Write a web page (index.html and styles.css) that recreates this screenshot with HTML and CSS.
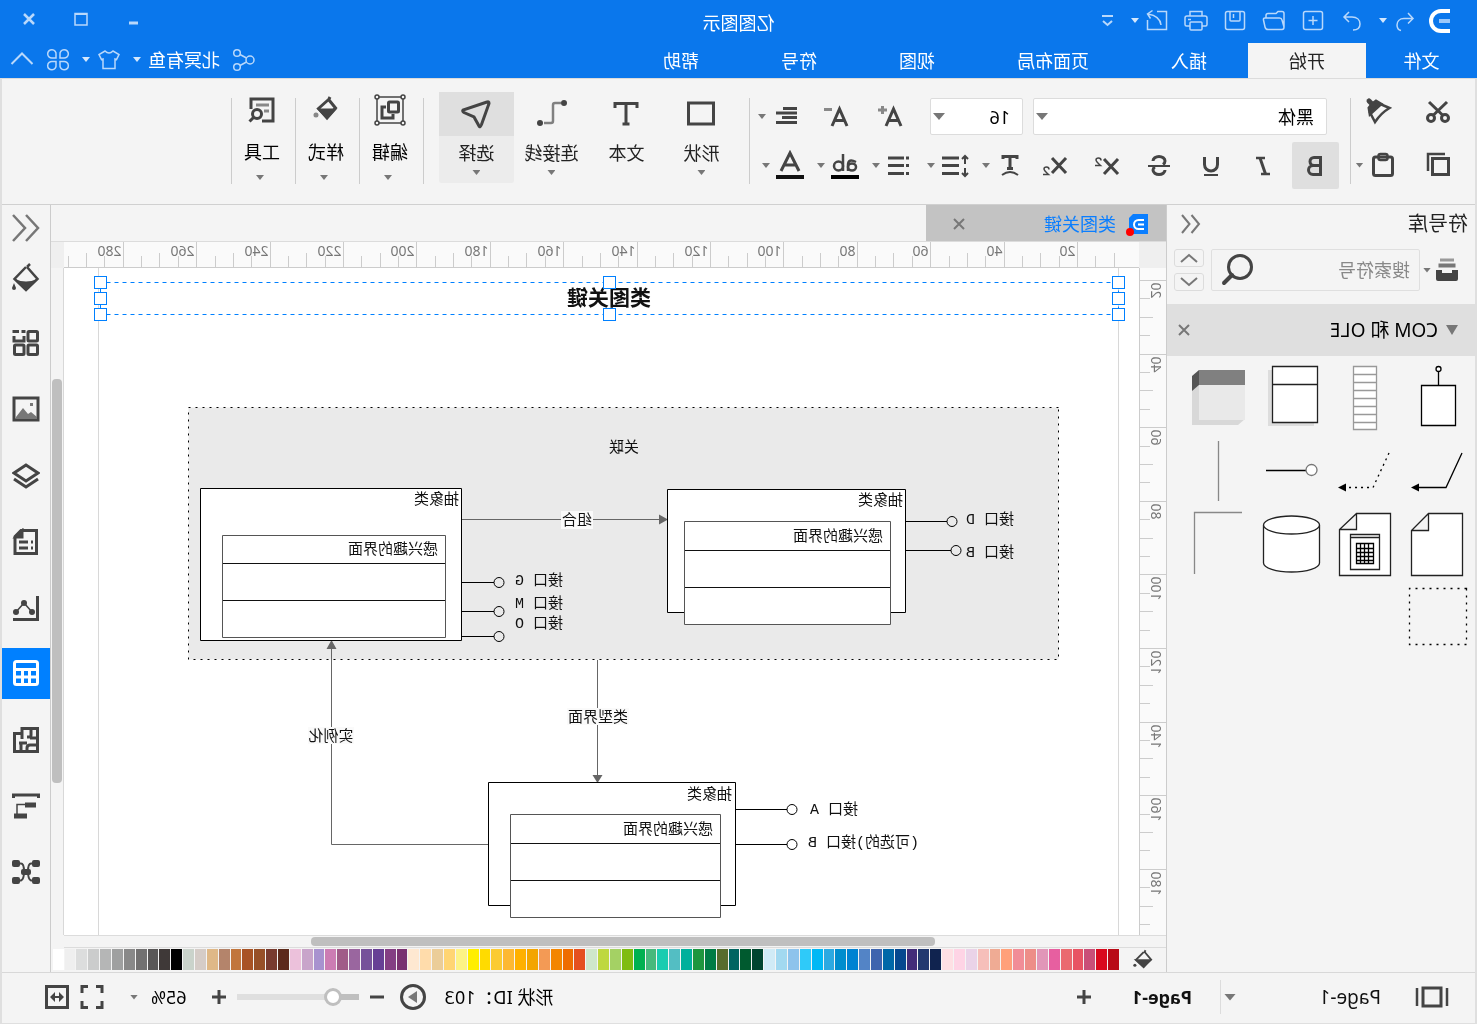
FILE: index.html
```html
<!DOCTYPE html>
<html lang="zh-CN">
<head>
<meta charset="utf-8">
<title>亿图图示</title>
<link rel="stylesheet" href="styles.css">
</head>
<body>
<div class="app">
  <header class="titlebar">
    <div class="quick">
      <svg class="logo" width="22" height="26" viewBox="0 0 22 26"><path d="M0 3H9a10 10 0 0 1 0 20H0" fill="none" stroke="#fff" stroke-width="4"/><path d="M0 13h11" stroke="#9cc8fa" stroke-width="4"/></svg>
      <div class="split"><button class="tool" aria-label="撤销"><svg width="24" height="24" viewBox="0 0 24 24"><path d="M9 4L4 9.500l5 5M4 9.500h9c4.500 0 7 3 7 6.500 0 3-1.500 5-4 5.500"/></svg></button><i class="caret"></i></div>
      <button class="tool" aria-label="重做"><svg width="24" height="24" viewBox="0 0 24 24"><path d="M15 3l5 5-5 5M20 8h-8c-5 0-8 3-8 7s3 6 7 6"/></svg></button>
      <button class="tool" aria-label="新建"><svg width="24" height="24" viewBox="0 0 24 24"><rect x="2.500" y="2.500" width="19" height="18" rx="2"/><path d="M12 7v9M7.500 11.500h9"/></svg></button>
      <button class="tool" aria-label="打开"><svg width="24" height="24" viewBox="0 0 24 24"><path d="M2 18V4.500q0-2 2-2h4l2 2h8q2 0 2 2V9M2 18l2-7q.5-2 2.500-2H21q2 0 1.500 2l-1.500 7q-.5 2.500-3 2.500H4q-2 0-2-2.500"/></svg></button>
      <button class="tool" aria-label="保存"><svg width="24" height="24" viewBox="0 0 24 24"><rect x="2.500" y="2.500" width="19" height="18" rx="2"/><path d="M7 3v8q0 1 1 1h8q1 0 1-1V3M13.500 5v4"/></svg></button>
      <button class="tool" aria-label="打印"><svg width="24" height="24" viewBox="0 0 24 24"><path d="M6 7V2.500h12V7M6 17H2.500Q1 17 1 15.500V9q0-2 2-2h18q2 0 2 2v6.500q0 1.500-1.500 1.500H18"/><rect x="6" y="13" width="12" height="8" rx="1"/><path d="M17 10.500h3"/></svg></button>
      <div class="split"><button class="tool" aria-label="导出"><svg width="24" height="24" viewBox="0 0 24 24"><path d="M12 2.500H2.500v18h19V11M8 16q1-9 13-11M16.500 1.500L21.500 5l-3 4.500"/></svg></button><i class="caret"></i></div>
      <button class="tool narrow" aria-label="自定义"><svg width="16" height="24" viewBox="0 0 16 24"><path d="M3 7h11M4 12l4.500 4 4.500-4" stroke-width="2"/></svg></button>
    </div>
    <h1 class="title">亿图图示</h1>
    <div class="winctl">
      <button aria-label="最小化"><svg width="16" height="16" viewBox="0 0 16 16"><path d="M3 12h9" stroke-width="3"/></svg></button>
      <button aria-label="最大化"><svg width="16" height="16" viewBox="0 0 16 16"><path d="M2 2.500h12V14H2z"/><path d="M2 3h12" stroke-width="2"/></svg></button>
      <button aria-label="关闭"><svg width="16" height="16" viewBox="0 0 16 16"><path d="M3 3l10 10M13 3L3 13" stroke-width="2.500"/></svg></button>
    </div>
  </header>
  <nav class="tabs">
    <button class="tab file">文件</button>
    <button class="tab on">开始</button>
    <button class="tab">插入</button>
    <button class="tab">页面布局</button>
    <button class="tab">视图</button>
    <button class="tab">符号</button>
    <button class="tab">帮助</button>
    <div class="account">
      <button class="tool" aria-label="分享"><svg width="24" height="24" viewBox="0 0 24 24"><circle cx="6" cy="12" r="4"/><circle cx="19" cy="5" r="3.300"/><circle cx="19" cy="19" r="3.300"/><path d="M9.500 10L16 6.500M9.500 14l6.500 3.500"/></svg></button>
      <button class="user">北冥有鱼<i class="caret"></i></button>
      <button class="user" aria-label="皮肤"><svg width="24" height="24" viewBox="0 0 24 24"><path d="M8 3q4 4 8 0l6 3.500-2.500 5L18 11v9.500H6V11l-1.500.5L2 6.500z"/></svg><i class="caret"></i></button>
      <button class="tool" aria-label="应用"><svg width="24" height="24" viewBox="0 0 24 24"><path d="M10 10H6.500A4.200 4.200 0 1 1 10 6.500zM14 10h3.500A4.200 4.200 0 1 0 14 6.500zM10 13.500H6.500A4.200 4.200 0 1 0 10 17zM14 13.500h3.500A4.200 4.200 0 1 1 14 17z"/></svg></button>
      <button class="tool" aria-label="收起"><svg width="24" height="24" viewBox="0 0 24 24"><path d="M1.500 16L12 5.500 22.500 16" stroke-width="2"/></svg></button>
    </div>
  </nav>

  <div class="body">
  <section class="ribbon">
    <div class="clip">
      <button aria-label="剪切"><svg width="28" height="28" viewBox="0 0 28 28"><circle cx="7" cy="21" r="3.500"/><circle cx="21" cy="21" r="3.500"/><path d="M5 5l14 13.500M23 5L9 18.500"/></svg></button>
      <button aria-label="格式刷"><svg width="28" height="28" viewBox="0 0 28 28"><path d="M2.500 11L13 6.500l9 9-5 9.500q-6-9-14.500-14z" stroke-width="2.500"/><path d="M11 7l5-3 4 3 3 4-1 6z" fill="currentColor"/><path d="M19 8l4-4" stroke-width="5" stroke-linecap="round"/></svg></button>
      <button aria-label="复制"><svg width="28" height="28" viewBox="0 0 28 28"><rect x="3.500" y="7.500" width="16" height="16"/><path d="M7 3h17v17" stroke-width="2.500"/></svg></button>
      <button class="paste" aria-label="粘贴"><svg width="28" height="28" viewBox="0 0 28 28"><rect x="4.500" y="6" width="19" height="18.500" rx="2"/><rect x="9.500" y="3" width="9" height="6" rx="2" stroke-width="2.500"/></svg><i class="caret"></i></button>
    </div>
    <div class="font">
      <div class="frow">
        <div class="combo wide"><select aria-label="字体"><option>黑体</option></select><i class="caret big"></i></div>
        <div class="combo"><select aria-label="字号"><option>16</option></select><i class="caret big"></i></div>
        <div class="sizes">
          <button class="fs" aria-label="增大字号"><svg width="28" height="28" viewBox="0 0 28 28"><path d="M3 23l7.500-17L18 23M6 17.500h9"/><path d="M17 7h9M21.500 3v8" stroke="#888"/></svg></button>
          <button class="fs" aria-label="减小字号"><svg width="28" height="28" viewBox="0 0 28 28"><path d="M3 23l7.500-17L18 23M6 17.500h9"/><path d="M18 6.500h8" stroke="#888"/></svg></button>
          <button class="drop" aria-label="对齐"><svg width="28" height="28" viewBox="0 0 28 28"><path d="M3 5.500h14M3 10h21M3 14.500h15M3 19.500h21"/></svg><i class="caret"></i></button>
        </div>
      </div>
      <div class="frow2">
        <div class="marks">
          <button class="mark on" aria-label="加粗"><svg width="28" height="28" viewBox="0 0 28 28"><path d="M8.500 5.500H15a4 4 0 0 1 0 8H8.500zM8.500 13.500H16a4.500 4.500 0 0 1 0 9H8.500z"/></svg></button>
          <button class="mark" aria-label="倾斜"><svg width="28" height="28" viewBox="0 0 28 28"><path d="M12 6h9M7 22h9" stroke-width="2.500"/><path d="M17 6l-5.500 16"/></svg></button>
          <button class="mark" aria-label="下划线"><svg width="28" height="28" viewBox="0 0 28 28"><path d="M7.500 5v7.500a6.500 6.500 0 0 0 13 0V5"/><path d="M7 23h14" stroke-width="2"/></svg></button>
          <button class="mark" aria-label="删除线"><svg width="28" height="28" viewBox="0 0 28 28"><path d="M20 9a6 4.500 0 0 0-12 0q0 2 2 3.500M8 18a6 4.500 0 0 0 12 0q0-2-2-3"/><path d="M3 14h22" stroke-width="2"/></svg></button>
          <button class="mark" aria-label="上标"><svg width="28" height="28" viewBox="0 0 28 28"><path d="M3 7l14 15M17 7L3 22"/><path d="M20 8.500q0-2.500 2.500-2.500T25 8q0 1.500-4.500 5.500H26" stroke-width="1.500"/></svg></button>
          <button class="mark" aria-label="下标"><svg width="28" height="28" viewBox="0 0 28 28"><path d="M3 6l14 15M17 6L3 21"/><path d="M20 17.500q0-2.500 2.500-2.500T25 17q0 1.500-4.500 5.500H26" stroke-width="1.500"/></svg></button>
        </div>
        <button class="drop" aria-label="文本方向"><svg width="28" height="28" viewBox="0 0 28 28"><path d="M7 7V4.500h14V7M14 5v11M11 16.500h6"/><path d="M6 23q8-6 16 0" stroke-width="2"/></svg><i class="caret"></i></button>
        <button class="drop" aria-label="行距"><svg width="28" height="28" viewBox="0 0 28 28"><path d="M10 6h17M10 13.500h17M10 21.500h17" /><path d="M4 4v8M1 7l3-3 3 3M4 16v8M1 21l3 3 3-3" stroke-width="2"/></svg><i class="caret"></i></button>
        <button class="drop" aria-label="列表"><svg width="28" height="28" viewBox="0 0 28 28"><path d="M10 6h16M10 13.500h16M10 21.500h16M5 6h3M5 13.500h3M5 21.500h3"/></svg><i class="caret"></i></button>
        <button class="drop" aria-label="填充文字"><svg width="28" height="32" viewBox="0 0 28 32"><ellipse cx="7" cy="17" rx="4" ry="3.500" stroke-width="2.500"/><path d="M3 12q8-4 8 3v6" stroke-width="2.500"/><ellipse cx="20.500" cy="16" rx="4.500" ry="4.500" stroke-width="2.500"/><path d="M16 4v17" stroke-width="2.500"/><path d="M0 27h28" stroke="#000" stroke-width="4"/></svg><i class="caret"></i></button>
        <button class="drop" aria-label="字体颜色"><svg width="28" height="32" viewBox="0 0 28 32"><path d="M5 21l9-18 9 18M8 15h12"/><path d="M0 27h28" stroke="#111" stroke-width="4"/></svg><i class="caret"></i></button>
      </div>
    </div>
    <div class="draw">
      <button class="big"><span class="pic"><svg width="32" height="32" viewBox="0 0 32 32"><rect x="3.500" y="5" width="25" height="21"/></svg></span><span>形状</span><i class="caret"></i></button>
      <button class="big"><span class="pic"><svg width="32" height="32" viewBox="0 0 32 32"><path d="M5 10V5.500h22V10M16 6v20M12.500 26h7"/></svg></span><span>文本</span></button>
      <button class="big"><span class="pic"><svg width="32" height="32" viewBox="0 0 32 32"><path d="M6 5h6q2 0 2 2v16q0 2 2 2h7" stroke="#808080" stroke-width="2.500"/><circle cx="3" cy="5" r="3" fill="currentColor" stroke="none"/><circle cx="27" cy="25" r="3" fill="currentColor" stroke="none"/></svg></span><span>连接线</span><i class="caret"></i></button>
      <button class="big on"><span class="pic"><svg width="32" height="32" viewBox="0 0 32 32"><path d="M5 4l24 8q1 1-1 2.500L18 19l-5 9q-1 2-2.500-1.500L3 5.500Q3 3 5 4z"/></svg></span><span>选择</span><i class="caret"></i></button>
    </div>
    <div class="group"><svg width="32" height="32" viewBox="0 0 32 32"><path d="M3 3h26v26H3z" stroke-width="1.500"/><g fill="#f4f4f4" stroke-width="1.500"><circle cx="3" cy="3" r="2"/><circle cx="29" cy="3" r="2"/><circle cx="3" cy="29" r="2"/><circle cx="29" cy="29" r="2"/></g><rect x="7.500" y="8" width="10" height="10" rx="1"/><path d="M20 13h4v11H13v-4"/></svg><button>编辑</button><i class="caret"></i></div>
    <div class="group"><svg width="32" height="32" viewBox="0 0 32 32"><path d="M13 6L6.500 14 15 23l8.500-8.500L14 6M14 7l-2-4"/><path d="M8 16h14l-7 8z" fill="currentColor"/><circle cx="26" cy="21" r="2.500" fill="#888" stroke="none"/></svg><button>样式</button><i class="caret"></i></div>
    <div class="group"><svg width="32" height="32" viewBox="0 0 32 32"><path d="M16 27H5V5h22v10"/><path d="M9 11h13M9 17h5" stroke="#888"/><circle cx="21" cy="20" r="4.500"/><path d="M24 23l4.500 4.500"/></svg><button>工具</button><i class="caret"></i></div>
  </section>

  <div class="work">
    <aside class="library">
      <div class="libhead"><h2>符号库</h2><button aria-label="收起符号库"><svg width="22" height="22" viewBox="0 0 22 22"><path d="M11.500 2L4 11l7.500 9M21 2l-7.500 9 7.500 9" stroke="#777" stroke-width="2"/></svg></button></div>
      <div class="find">
        <button class="box" aria-label="符号分类"><svg width="22" height="24" viewBox="0 0 22 24"><path d="M4 2h14" stroke="#999"/><path d="M2.500 7.500h17" stroke="#777" stroke-width="4"/><path d="M0 12h6v3h10v-3h6v9q0 2-2 2H2q-2 0-2-2z" fill="currentColor" stroke="none"/></svg><i class="caret"></i></button>
        <label class="search"><input type="text" placeholder="搜索符号" aria-label="搜索符号"><svg width="34" height="34" viewBox="0 0 34 34"><circle cx="15" cy="14" r="11.500"/><path d="M23 22l8 8" stroke-width="4" stroke-linecap="round"/></svg></label>
        <div class="steps">
          <button aria-label="上一个"><svg width="18" height="10" viewBox="0 0 18 10"><path d="M1 9l8-7 8 7" stroke="#777" stroke-width="2"/></svg></button>
          <button aria-label="下一个"><svg width="18" height="10" viewBox="0 0 18 10"><path d="M1 1l8 7 8-7" stroke="#777" stroke-width="2"/></svg></button>
        </div>
      </div>
      <div class="cat"><i class="caret huge"></i><h3>COM 和 OLE</h3><button aria-label="关闭分类"><svg width="12" height="12" viewBox="0 0 12 12"><path d="M1 1l10 10M11 1L1 11" stroke="#777"/></svg></button></div>
      <div class="shapes">
        <button aria-label="COM 对象"><svg viewBox="0 0 73 73"><path d="M19.500 25.500h34v40h-34zM36.500 25V12"/><circle cx="36.500" cy="9" r="2.500"/></svg></button>
        <button aria-label="虚函数表"><svg viewBox="0 0 73 73"><path stroke="#999" d="M25.500 6.500h23v63h-23zM25 14.500h24M25 22.500h24M25 30.500h24M25 38.500h24M25 46.500h24M25 54.500h24M25 62.500h24"/></svg></button>
        <button aria-label="边界"><svg viewBox="0 0 73 73"><path fill="#ddd" stroke="none" d="M15 10h46v56H15z"/><path stroke="#222" d="M11.500 6.500h45v56h-45zM11 24.500h46"/></svg></button>
        <button aria-label="组件"><svg viewBox="0 0 73 73"><g stroke="none"><path fill="#d8d8d8" d="M57 25l7 5v35H18l-7-6z"/><path fill="#e9e9e9" d="M11 25h46v35H11z"/><path fill="#808080" d="M11 10h46v15H11z"/><path fill="#555" d="M57 10l7 6v15l-7-6z"/></g></svg></button>
        <button aria-label="引用"><svg viewBox="0 0 73 73"><path fill="none" d="M13 20l16 34.500h28"/><path fill="#000" stroke="none" d="M56 50.500l8 4-8 4z"/></svg></button>
        <button aria-label="弱引用"><svg viewBox="0 0 73 73"><path fill="none" stroke-dasharray="2 4" d="M13 20l16 34.500h28"/><path fill="#000" stroke="none" d="M56 50.500l8 4-8 4z"/></svg></button>
        <button aria-label="接口"><svg viewBox="0 0 73 73"><path d="M23 37.500h40"/><circle cx="17.500" cy="37" r="5.500" stroke="#777"/></svg></button>
        <button aria-label="垂直线"><svg viewBox="0 0 73 73"><path stroke="#888" d="M37.500 8v60"/></svg></button>
        <button aria-label="文档"><svg viewBox="0 0 73 73"><path stroke="#222" d="M12.500 7.500h34l17 17v45h-51zM46.500 7.500v17h17"/></svg></button>
        <button aria-label="可执行文件"><svg viewBox="0 0 73 73"><path stroke="#222" d="M11.500 7.500h34l17 16v46h-51zM45.500 7.500v16h17M22.500 28.500h29v35h-29zM22 31.500h30"/><path d="M28.500 37.500h17v20h-17zM33.500 37v21M37.500 37v21M41.500 37v21M28 42.500h18M28 46.500h18M28 50.500h18M28 54.500h18"/></svg></button>
        <button aria-label="数据存储"><svg viewBox="0 0 73 73"><path stroke="#222" d="M9.500 19v38a28 9 0 0 0 56 0V19"/><ellipse stroke="#222" cx="37.500" cy="19" rx="28" ry="9"/></svg></button>
        <button aria-label="折线"><svg viewBox="0 0 73 73"><path fill="none" stroke="#888" d="M14 6.500h47.500V68"/></svg></button>
        <button aria-label="虚线框"><svg viewBox="0 0 73 73"><path fill="none" stroke-dasharray="2 5" d="M8.500 9.500h57v56h-57z"/></svg></button>
      </div>
    </aside>

    <main class="center">
      <div class="docs"><div class="doc"><svg width="24" height="24" viewBox="0 0 24 24"><path d="M2 2h15l4 4v16H2z" fill="#0a7eff" stroke="none"/><path d="M6 8h5.500a4.500 4.500 0 0 1 0 9H6M6 12.500h6" stroke="#fff"/><circle cx="20" cy="20" r="4" fill="#f00" stroke="none"/></svg><a href="#doc">类图关键</a><button aria-label="关闭文档"><svg width="12" height="12" viewBox="0 0 12 12"><path d="M1 1l10 10M11 1L1 11" stroke="#777"/></svg></button></div></div>
      <div class="board">
        <div class="corner"></div>
        <svg class="ruler-x" id="rx"></svg>
        <div class="corner"></div>
        <svg class="ruler-y" id="ry"></svg>
        <div class="canvas">
          <svg width="1075" height="667" viewBox="338 268 1075 667">
            <path class="edge" d="M358.500 268v667M1378.500 268v667"/>
            <rect class="zone" x="418.500" y="407.500" width="870" height="252"/>
            <g class="wire">
              <path d="M1016 519.500H816M879.500 660v116M989 844.500h156.500V648"/>
            </g>
            <g class="head"><path d="M809 519.500l9-5v10zM879.500 783l-5-8h10zM1145.500 640l-5 9h10z"/></g>
            <g class="outer"><path d="M571.500 489.500h238v123h-238zM1015.500 488.500h261v152h-261zM741.500 782.500h247v123h-247z"/></g>
            <g class="inner">
              <path d="M586.500 521.500h206v103h-206zM1031.500 535.500h223v102h-223zM756.500 814.500h210v103h-210z"/>
              <path class="dark" d="M587 550.500h205M587 587.500h205M1032 563.500h222M1032 600.500h222M757 843.500h209M757 880.500h209"/>
            </g>
            <g class="port">
              <path d="M571 521.500h-41M571 550.500h-45M1016 582.500h-33M1016 611.500h-33M1016 636.500h-33M741 809.500h-51M741 844.500h-51"/>
              <circle cx="525" cy="521.500" r="5"/><circle cx="521" cy="550.500" r="5"/><circle cx="978" cy="582.500" r="5"/><circle cx="978" cy="611.500" r="5"/><circle cx="978" cy="636.500" r="5"/><circle cx="685" cy="809.500" r="5"/><circle cx="685" cy="844.500" r="5"/>
            </g>
            <path class="plate" d="M884 511h32v18h-32zM848 708h62v17h-62zM1123 727h46v17h-46z"/>
            <g class="lbl mid"><text x="853" y="452">关联</text><text x="900" y="525">组合</text><text x="879" y="722">类型界面</text><text x="1146" y="741">实例化</text></g>
            <g class="lbl">
              <text x="574" y="505">抽象类</text><text x="1018" y="504">抽象类</text><text x="745" y="799">抽象类</text>
              <text x="594" y="541">感兴趣的界面</text><text x="1039" y="554">感兴趣的界面</text><text x="764" y="834">感兴趣的界面</text>
              <text x="463" y="524">接口 D</text><text x="463" y="557">接口 B</text>
              <text x="914" y="585">接口 G</text><text x="914" y="608">接口 M</text><text x="914" y="628">接口 O</text>
              <text x="619" y="814">接口 A</text><text x="558" y="847">(可选的)接口 B</text>
            </g>
            <text class="head-text" x="868" y="305">类图关键</text>
            <rect class="sel" x="358.500" y="282.500" width="1018" height="32"/>
            <g class="handle"><rect x="352.500" y="276.500" width="12" height="12"/><rect x="861.500" y="276.500" width="12" height="12"/><rect x="1370.500" y="276.500" width="12" height="12"/><rect x="352.500" y="292.500" width="12" height="12"/><rect x="1370.500" y="292.500" width="12" height="12"/><rect x="352.500" y="308.500" width="12" height="12"/><rect x="861.500" y="308.500" width="12" height="12"/><rect x="1370.500" y="308.500" width="12" height="12"/></g>
          </svg>
        </div>
        <div class="vscroll"><i></i></div>
      </div>
      <div class="hscroll"><i></i></div>
      <div class="colors">
        <svg width="20" height="22" viewBox="0 0 32 32"><path d="M14 4L3 17l12 11 12-11L15 5M14 6l-2-4"/><path d="M5 18h22L15 29z" fill="currentColor"/><circle cx="29" cy="26" r="2.500" fill="currentColor" stroke="none"/></svg>
        <div class="swatches" id="swatches"></div>
      </div>
    </main>

    <aside class="side">
      <button class="fold" aria-label="收起"><svg width="28" height="28" viewBox="0 0 28 28"><path d="M14 1L2 14l12 13M27 1L15 14l12 13" stroke="#777" stroke-width="2.500"/></svg></button>
      <button aria-label="填充"><svg width="28" height="30" viewBox="0 0 28 30"><path d="M13 4L2.500 16 14 27l11.500-11L14 4M13 4l-3-3" stroke-width="2.500"/><path d="M3 16q11 5 22 0L14 28z" fill="currentColor" stroke="none"/><path d="M26 20l2 5q0 2-2 2t-2-2z" fill="currentColor" stroke="none"/></svg></button>
      <button aria-label="符号"><svg width="28" height="28" viewBox="0 0 28 28"><rect x="2.500" y="1.500" width="9.500" height="9.500" rx="1"/><path d="M16 6v5h10V6M16 3V1.500h2.500M21 1.500h5V3"/><rect x="2.500" y="15" width="9.500" height="9.500" rx="1"/><rect x="16" y="15" width="9.500" height="9.500" rx="1"/></svg></button>
      <button aria-label="图片"><svg width="28" height="28" viewBox="0 0 28 28"><path d="M2 2h24v22H2z"/><path d="M3 21l6-5 3 2 5-6 7 9v2H3z" fill="#777" stroke="none"/><path d="M7 7h3v3H7z" fill="#777" stroke="none"/></svg></button>
      <button aria-label="图层"><svg width="28" height="28" viewBox="0 0 28 28"><path d="M14 3l12 8-12 8-12-8zM2 17l12 8 12-8"/></svg></button>
      <button aria-label="页面"><svg width="28" height="28" viewBox="0 0 28 28"><path d="M3.500 2.500H19l6 6v17H3.500z"/><path d="M18 3v6h6z" fill="currentColor"/><path d="M7 14h2M12 14h9M7 20h2M12 20h9"/></svg></button>
      <button aria-label="图表"><svg width="28" height="28" viewBox="0 0 28 28"><path d="M2.500 2v23.500H27"/><path d="M8 18l8-9 8 9" stroke-width="1.500"/><g fill="currentColor" stroke="none"><circle cx="8" cy="18" r="3"/><circle cx="16" cy="9" r="3"/><circle cx="24" cy="18" r="3"/></g></svg></button>
      <button class="on" aria-label="表格"><svg width="28" height="28" viewBox="0 0 28 28"><rect x="2.500" y="1.500" width="23" height="23" rx="2"/><path d="M3 9.500h22M3 17h22M10.500 9v15M17.500 9v15"/></svg></button>
      <button aria-label="平面图"><svg width="28" height="28" viewBox="0 0 28 28"><path d="M2.500 2.500H18v5h7.500v18h-23zM9 3v6q0 2 2 2h2M2 12h8M2 19h8q3 0 3 3v3M18 7v6M13 17h8M19 17v8"/></svg></button>
      <button aria-label="组织图"><svg width="28" height="28" viewBox="0 0 28 28"><path d="M1.500 6V3h25v3" /><path d="M4 13h11M13 24h13" stroke-width="5"/><path d="M15 12.500h8V23" stroke-width="1.500"/></svg></button>
      <button aria-label="思维导图"><svg width="28" height="28" viewBox="0 0 28 28"><path d="M4 5.500h5q3 0 3 8t-3 9H4M24 5.500h-5q-3 0-3 8t3 9h5" stroke-width="2"/><g fill="currentColor" stroke="none"><rect x="0" y="2" width="8" height="7" rx="2"/><rect x="0" y="19" width="8" height="7" rx="2"/><rect x="20" y="2" width="8" height="7" rx="2"/><rect x="20" y="19" width="8" height="7" rx="2"/><rect x="9" y="11" width="10" height="6" rx="2"/></g></svg></button>
    </aside>
  </div>

  <footer class="status">
    <button class="view" aria-label="视图"><svg width="34" height="22" viewBox="0 0 34 22"><path d="M8 2h18v18H8z"/><path d="M2 2v18M32 2v18" stroke-width="2.500"/></svg></button>
    <button class="page">Page-1<i class="caret big"></i></button>
    <button class="page now">Page-1</button>
    <button class="add" aria-label="新增页面"><svg width="16" height="16" viewBox="0 0 16 16"><path d="M8 1v14M1 8h14"/></svg></button>
    <div class="info">形状 ID：103</div>
    <button aria-label="播放"><svg width="28" height="28" viewBox="0 0 28 28"><circle cx="14" cy="14" r="11.500"/><path d="M19 14l-9-6v12z" fill="#777" stroke="none"/></svg></button>
    <div class="zoom">
      <button aria-label="缩小"><svg width="16" height="16" viewBox="0 0 16 16"><path d="M1 8h14"/></svg></button>
      <input type="range" min="0" max="100" value="16" aria-label="缩放">
      <button aria-label="放大"><svg width="16" height="16" viewBox="0 0 16 16"><path d="M8 1v14M1 8h14"/></svg></button>
    </div>
    <button class="pct">65%<i class="caret"></i></button>
    <button aria-label="全屏"><svg width="24" height="26" viewBox="0 0 24 26"><path d="M2 9V2.500h6M16 2.500h6V9M22 17v6.500h-6M8 23.500H2V17"/></svg></button>
    <button class="fit" aria-label="适合宽度"><svg width="24" height="26" viewBox="0 0 24 26"><path d="M1.500 2.500h21v21h-21z"/><path d="M8 13h8" stroke-width="2"/><path d="M10 8v10l-5-5zM14 8v10l5-5z" fill="currentColor" stroke="none"/></svg></button>
  </footer>
  </div>
</div>
<script src="app.js"></script>
</body>
</html>
```
FILE: styles.css
```css
* { box-sizing: border-box; }
body {
  margin: 0;
  font-family: "Noto Sans", "Noto Sans CJK SC", sans-serif;
  font-size: 18px;
  line-height: 24px;
  color: #222;
  background: #f4f4f4;
}
button, input, select { font: inherit; color: inherit; background: none; border: 0; padding: 0; margin: 0; }
button { display: flex; align-items: center; justify-content: center; white-space: nowrap; }
h1, h2, h3 { margin: 0; font-size: 18px; font-weight: 400; }
svg { display: block; flex: none; fill: none; stroke: currentColor; stroke-width: 3; overflow: hidden; }
.app { min-height: 100vh; display: flex; flex-direction: column; transform: scaleX(-1); }

.caret { display: block; flex: none; width: 8px; height: 5px; background: #777; clip-path: polygon(0 0, 100% 0, 50% 100%); }
.caret.big { width: 12px; height: 7px; }
.caret.huge { width: 12px; height: 10px; }

/* title bar and tabs */
.titlebar { display: grid; grid-template-columns: 1fr auto 1fr; align-items: center; height: 43px; background: #0a77ec; color: #fff; }
.titlebar svg, .tabs svg { stroke-width: 1.5; }
.titlebar .caret, .tabs .caret { background: #d5e8fd; }
.quick { display: flex; align-items: center; gap: 15px; padding: 0 0 2px 27px; }
.quick .logo { margin-right: -4px; }
.quick .tool, .winctl { color: #b9d8fb; }
.split { display: flex; align-items: center; gap: 6px; }
.winctl { display: flex; justify-content: flex-end; padding: 0 3px 6px 0; }
.winctl button { width: 52px; }
.title { padding-top: 2px; }
.tabs { display: flex; height: 35px; background: #0a77ec; color: #fff; }
.tab { padding: 1px 41px 0; }
.tab.file { width: 111px; padding: 1px 0 0; }
.tab.on { background: #f4f4f4; color: #222; }
.account { display: flex; align-items: center; gap: 12px; margin-left: auto; padding: 0 10px 2px 0; }
.account svg { color: #b9d8fb; }
.user { gap: 7px; }

.body { flex: 1; display: flex; flex-direction: column; border: solid #dfdfdf; border-width: 0 2px 2px; }

/* ribbon */
.ribbon { display: flex; height: 127px; border-top: 1px solid #dcdcdc; border-bottom: 1px solid #d0d0d0; color: #444; background: #f4f4f4; }
.clip { display: grid; grid-template-columns: 60px 60px; grid-auto-rows: 54px; padding: 5px 0 0 7px; width: 125px; background: linear-gradient(#ccc, #ccc) right 19px / 1px 86px no-repeat; }
.clip .paste { gap: 6px; padding-left: 3px; }
.font { padding: 19px 4px 0 11px; width: 601px; display: flex; flex-direction: column; gap: 7px; background: linear-gradient(#ccc, #ccc) right 19px / 1px 86px no-repeat; }
.frow { display: flex; gap: 10px; padding-left: 12px; height: 37px; }
.combo { display: grid; width: 93px; align-items: center; background: #fff; border: 1px solid #dcdcdc; border-radius: 2px; color: #000; }
.combo.wide { width: 294px; }
.combo > * { grid-area: 1 / 1; }
.combo select { appearance: none; width: 100%; height: 35px; padding-left: 12px; outline: 0; }
.combo .caret { justify-self: end; margin-right: 2px; }
.sizes { display: flex; gap: 14px; padding-left: 10px; }
.fs { width: 40px; }
.drop { width: 44px; gap: 6px; justify-content: flex-end; }
.frow2 { display: flex; gap: 11px; }
.marks { display: flex; gap: 5px; margin-right: -5px; }
.mark { width: 47px; height: 47px; border-radius: 2px; }
.mark.on { background: #dfdfdf; }
.draw { display: flex; align-items: flex-start; padding: 13px 16px 0 10px; background: linear-gradient(#ccc, #ccc) right 19px / 1px 86px no-repeat; }
.draw .big { flex-direction: column; justify-content: flex-start; width: 75px; height: 91px; border-radius: 2px; color: #222; }
.big .pic { display: flex; align-items: center; justify-content: center; width: 100%; height: 44px; color: #444; }
.big span + span { margin: 5px 0; }
.big.on { background: #ececec; }
.big.on .pic { background: #dfdfdf; }
.group { display: flex; flex-direction: column; align-items: center; width: 64px; padding: 15px 0 0 2px; background: linear-gradient(#ccc, #ccc) right 19px / 1px 86px no-repeat; }
.group button { color: #000; margin: 14px 0 11px; }
.group .caret { margin-left: 4px; }

/* workspace */
.work { flex: 1; display: flex; color: #444; }
.library { width: 309px; border-right: 1px solid #ccc; }
.libhead { display: flex; justify-content: space-between; align-items: center; height: 38px; padding: 0 14px 0 7px; color: #222; }
.libhead h2 { font-size: 20px; }
.find { display: flex; align-items: center; gap: 7px; height: 61px; padding: 0 7px 7px 17px; }
.box { gap: 5px; width: 31px; justify-content: flex-start; }
.search { display: flex; align-items: center; flex: 1; min-width: 0; height: 42px; padding: 0 9px; border: 1px solid #dfdfdf; border-radius: 2px; }
.search input { flex: 1; width: 0; }
.search input::placeholder { color: #888; opacity: 1; }
.steps { display: flex; flex-direction: column; gap: 6px; }
.steps button { width: 30px; height: 18px; border: 1px solid #dcdcdc; border-radius: 3px; }
.cat { display: flex; align-items: center; height: 52px; padding: 0 11px 0 17px; gap: 8px; background: #dfdfdf; color: #000; }
.cat h3 { font-size: 19px; }
.cat button { margin-left: auto; }
.cat svg { stroke-width: 2; }
.shapes { display: grid; grid-template-columns: repeat(4, 73px); grid-auto-rows: 73px; padding-top: 4px; }
.shapes svg { width: 73px; height: 73px; fill: #fff; stroke: #000; stroke-width: 1.300; }

.center { flex: 1; min-width: 0; display: flex; flex-direction: column; }
.docs { height: 36px; background: #f4f4f4; }
.doc { display: flex; align-items: center; width: 240px; height: 36px; padding: 2px 27px 0 16px; gap: 10px; background: #c3c3c3; }
.doc svg { stroke-width: 2; }
.doc a { color: #0a7eff; text-decoration: none; }
.doc button { margin-left: auto; }
.board { flex: 1; display: grid; grid-template-columns: 27px minmax(0, 1fr) 13px; grid-template-rows: 26px minmax(0, 1fr); border-top: 1px solid #dcdcdc; }
.corner { background: #efefef; }
.ruler-x, .ruler-y { width: 100%; height: 100%; background: #fafafa; stroke: #ccc; stroke-width: 1; }
.ruler-x text, .ruler-y text { fill: #777; stroke: none; font-size: 14px; }
.canvas { background: #fff; overflow: hidden; }
.canvas svg { stroke-width: 1; }
.canvas .edge { stroke: #d8d8d8; }
.zone { fill: #eaeaea; stroke: #000; stroke-dasharray: 2 5; stroke-width: 1; }
.wire { stroke: #666; }
.head { fill: #666; stroke: none; }
.outer { fill: #fff; stroke: #000; }
.inner { fill: #fff; stroke: #555; }
.dark { stroke: #111; }
.port { stroke: #000; }
.plate { fill: #fafafa; stroke: none; }
.lbl { fill: #111; stroke: none; font: 15px "Liberation Mono", "Noto Sans CJK SC", monospace; }
.mid, .head-text { text-anchor: middle; }
.head-text { fill: #111; stroke: none; font-size: 21px; font-weight: 700; }
.sel { stroke: #0080ff; stroke-dasharray: 4 4; }
.handle { fill: #fff; stroke: #0080ff; }
.vscroll { border-left: 1px solid #d8d8d8; padding: 111px 1px 0; }
.vscroll i { display: block; width: 10px; height: 404px; border-radius: 4px; background: #bfbfbf; }
.hscroll { height: 13px; border: solid #dcdcdc; border-width: 1px 0; margin-right: 13px; padding: 1px 247px 0 231px; }
.hscroll i { display: block; height: 9px; border-radius: 4px; background: #bfbfbf; }
.colors { display: flex; align-items: center; height: 24px; padding: 0 1px 2px 13px; gap: 14px; }
.swatches { flex: 1; display: flex; gap: 1px; }
.swatches button { flex: 1; height: 21px; }

.side { width: 49px; border-left: 1px solid #ccc; display: flex; flex-direction: column; gap: 15px; }
.side button { height: 51px; }
.side .fold { height: 46px; margin-bottom: -14px; }
.side .on { background: #0080ff; color: #fff; }

/* status bar */
.status { display: flex; align-items: center; height: 51px; padding-bottom: 2px; border-top: 1px solid #d8d8d8; color: #444; }
.view { margin-left: 26px; }
.page { color: #111; }
.page:not(.now) { width: 160px; margin-left: 34px; padding-right: 3px; justify-content: space-between; font-size: 19px; }
.now { font-weight: 700; padding-left: 28px; border-left: 1px solid #dcdcdc; height: 34px; }
.add { margin-left: 40px; }
.info { margin-left: auto; margin-right: 18px; color: #000; }
.zoom { display: flex; align-items: center; gap: 10px; margin-left: 14px; }
.zoom input { appearance: none; width: 122px; height: 18px; background: linear-gradient(90deg, #bfbfbf 20%, #dfdfdf 20%) center / 100% 6px no-repeat; }
.zoom input::-webkit-slider-thumb { appearance: none; width: 18px; height: 18px; border: 3px solid #bfbfbf; border-radius: 50%; background: #fff; }
.pct { gap: 13px; margin: 0 26px 0 24px; color: #000; }
.fit { margin: 0 43px 0 11px; }
```
FILE: app.js
```js
var NS = 'http://www.w3.org/2000/svg';

function line(svg, x1, y1, x2, y2) {
  var p = document.createElementNS(NS, 'path');
  p.setAttribute('d', 'M' + x1 + ' ' + y1 + 'L' + x2 + ' ' + y2);
  svg.appendChild(p);
}

function label(svg, text, x, y, vertical) {
  var t = document.createElementNS(NS, 'text');
  t.setAttribute('x', x);
  t.setAttribute('y', y);
  if (vertical) {
    t.setAttribute('transform', 'rotate(-90 ' + x + ' ' + y + ')');
    t.setAttribute('text-anchor', 'end');
  }
  t.textContent = text;
  svg.appendChild(t);
}

// horizontal ruler: a numbered tick every 20 mm, three minor ticks between
var rx = document.getElementById('rx');
for (var i = -2; i < 60; i++) {
  var x = Math.round(61 + i * 73.4 / 4) + 0.5;
  var major = i % 4 === 0;
  line(rx, x, major ? 0 : i % 2 ? 14 : 11, x, 26);
  if (major && i <= 52) label(rx, 20 + i * 5, x + 2, 14);
}
line(rx, 0, 25.5, 3000, 25.5);

// vertical ruler
var ry = document.getElementById('ry');
for (var j = -3; j < 36; j++) {
  var y = Math.round(12 + j * 73.6 / 4) + 0.5;
  var full = j % 4 === 0;
  line(ry, full ? 0 : j % 2 ? 16 : 13, y, 27, y);
  if (full) label(ry, 20 + j * 5, 15, y + 2, true);
}
line(ry, 26.5, 0, 26.5, 3000);

var colors = ('b80a16 d9091d c94f78 e85464 ea6a6f e75fa0 e196b8 ed8d88 f18d97 ffa07a efab94 f6bfba ead3e8 fed4e5 fee0e4 ' +
  '10234f 22396f 432d79 06488f 0068a8 3e64ae 5384c6 0082d2 008dce 2ca9e1 00b8f5 2fcaf9 8dc3ec a2d9f0 d0ebf6 ' +
  '00452f 005a2f 006460 586c2d 007c45 1e963e 00b09c 53bec3 1accb0 47b97c 00b150 7fbc10 a4d164 bed840 cfe7cb ' +
  'e5501f ee6c00 f38600 f39a55 f3a500 ffb000 fdb833 fbcb33 ffdb00 ffee00 fdf386 ffd573 ebcd98 ffdcab fee8d1 ' +
  '7a3170 843e83 673f95 76529a 9a669f a05b88 cc7cb3 a892cf c8a4ca ecc1db ' +
  '5c2a1b 783b2f 975028 a85325 c1763d b4846b dfb887 d5ccc7 cad3cb ' +
  '000000 3f3938 595757 727171 898989 9fa0a0 b5b6b6 cbcccc dcdddd efefef ffffff').split(' ');
var box = document.getElementById('swatches');
colors.forEach(function (c) {
  var b = document.createElement('button');
  b.style.background = '#' + c;
  b.setAttribute('aria-label', '#' + c);
  box.appendChild(b);
});
```
